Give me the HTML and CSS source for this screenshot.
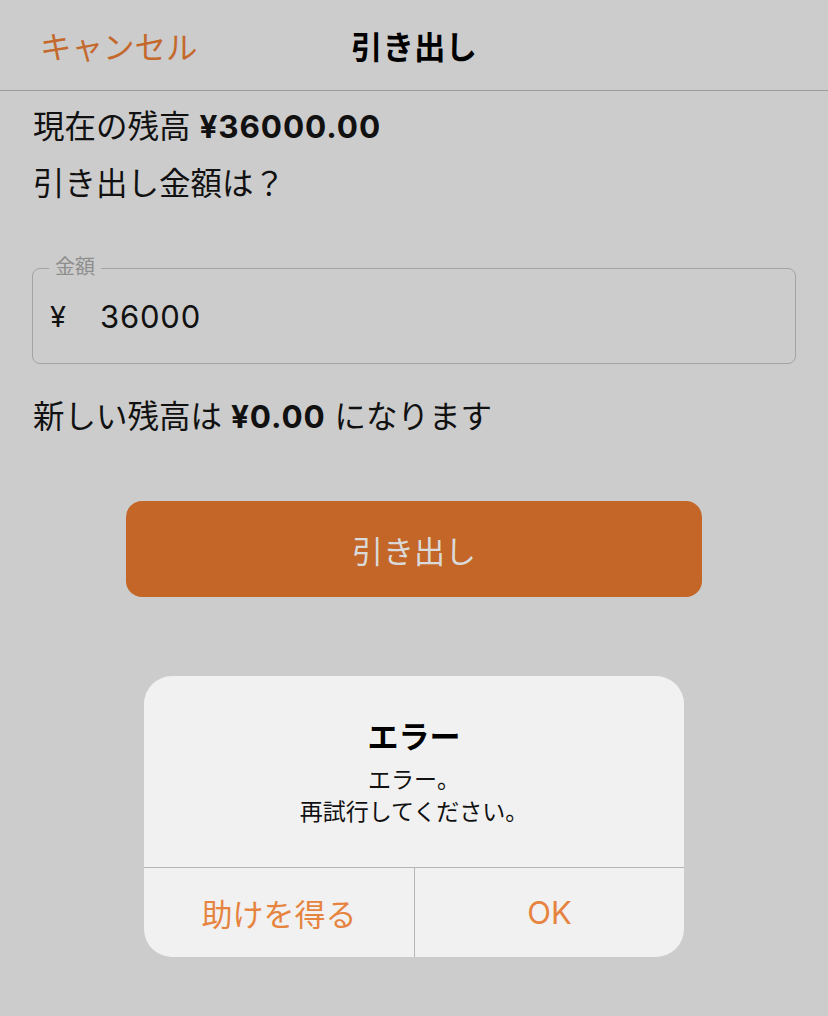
FILE: index.html
```html
<!DOCTYPE html>
<html lang="ja">
<head>
    <meta charset="UTF-8">
    <meta name="viewport" content="width=device-width, initial-scale=1.0">
    <title>引き出し</title>
    <link rel="stylesheet" href="styles.css">
</head>
<body>
    <div class="screen">
        <header class="nav">
            <span class="nav-cancel">キャンセル</span>
            <span class="nav-title">引き出し</span>
            <span></span>
        </header>

        <main class="content">
            <p class="balance">現在の残高 <b>¥36000.00</b></p>
            <p class="question">引き出し金額は？</p>

            <div class="field">
                <span class="field-label">金額</span>
                <span class="field-currency">¥</span>
                <span class="field-value">36000</span>
            </div>

            <p class="new-balance">新しい残高は <b>¥0.00</b> になります</p>

            <button class="withdraw-btn">引き出し</button>
        </main>

        <div class="alert">
            <div class="alert-body">
                <div class="alert-title">エラー</div>
                <div class="alert-msg">エラー。<br>再試行してください。</div>
            </div>
            <div class="alert-actions">
                <button class="alert-btn">助けを得る</button>
                <button class="alert-btn">OK</button>
            </div>
        </div>
    </div>
</body>
</html>
```

FILE: styles.css
```css
body {
    margin: 0;
    background-color: #cccccc;
    font-family: Inter, "Noto Sans CJK JP", sans-serif;
    color: #111;
}
.screen {
    position: relative;
    width: 828px;
    height: 1016px;
    overflow: hidden;
}
.nav {
    height: 90px;
    border-bottom: 1px solid #9c9c9c;
    display: grid;
    grid-template-columns: 1fr auto 1fr;
    align-items: center;
    font-size: 31.5px;
}
.nav-cancel {
    padding-left: 40px;
    color: #c4692c;
}
.nav-title {
    font-weight: bold;
    color: #000;
}
.content {
    padding: 0 32px;
    font-size: 31.5px;
}
.content p {
    margin: 0;
    line-height: 40px;
}
.content b {
    font-weight: bold;
    letter-spacing: 0.9px;
}
.balance {
    margin-top: 16px !important;
    padding-left: 1px;
}
.question {
    margin-top: 17px !important;
    padding-left: 1px;
}
.field {
    position: relative;
    margin-top: 64px;
    height: 94px;
    border: 1px solid #a3a3a3;
    border-radius: 8px;
    display: flex;
    align-items: center;
    padding-left: 17px;
}
.field-label {
    position: absolute;
    top: -14px;
    left: 16px;
    padding: 0 6px;
    background-color: #cccccc;
    color: #8e8e8e;
    font-size: 20px;
    line-height: 24px;
}
.field-currency {
    width: 50px;
    font-size: 29px;
}
.field-value {
    font-size: 31px;
    letter-spacing: 0.8px;
}
.new-balance {
    margin-top: 33px !important;
    padding-left: 1px;
}
.withdraw-btn {
    display: block;
    width: 576px;
    height: 96px;
    margin: 64px auto 0;
    border: none;
    border-radius: 16px;
    background-color: #c36627;
    color: #dadada;
    font-family: inherit;
    font-size: 31px;
}
.alert {
    position: absolute;
    left: 144px;
    top: 676px;
    width: 540px;
    height: 281px;
    background-color: #f1f1f1;
    border-radius: 28px;
    overflow: hidden;
    display: flex;
    flex-direction: column;
}
.alert-body {
    height: 192px;
    box-sizing: border-box;
    padding-top: 41px;
    text-align: center;
    border-bottom: 1px solid #b5b5b5;
}
.alert-title {
    font-size: 31px;
    font-weight: bold;
    line-height: 40px;
    color: #000;
}
.alert-msg {
    margin-top: 7px;
    font-size: 23px;
    line-height: 32px;
    color: #111;
}
.alert-actions {
    flex: 1;
    display: grid;
    grid-template-columns: 1fr 1fr;
}
.alert-btn {
    border: none;
    background: none;
    font-family: inherit;
    font-size: 31px;
    color: #e6843f;
}
.alert-btn + .alert-btn {
    border-left: 1px solid #b5b5b5;
}
```
